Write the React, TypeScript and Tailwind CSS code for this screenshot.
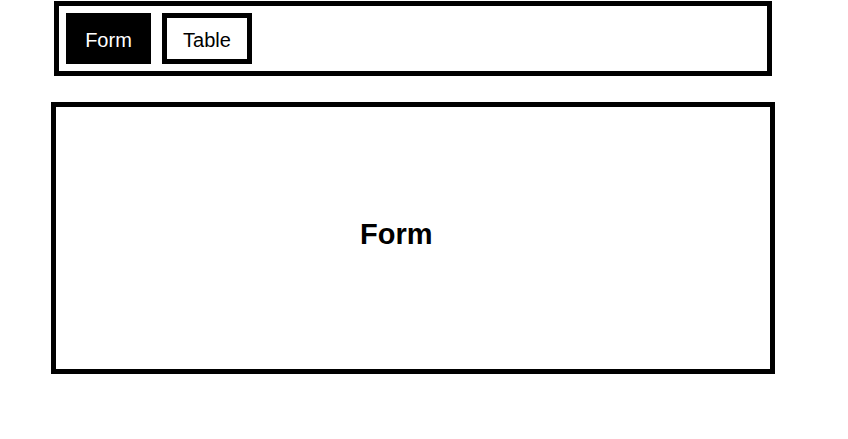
import { useState } from 'react';

type Tab = 'Form' | 'Table';

export default function App() {
  const [tab, setTab] = useState<Tab>('Form');

  const tabClass = (t: Tab) =>
    `h-[51px] border-[5px] border-black text-[20px] leading-none pt-[3px] flex items-center justify-center ${
      t === tab ? 'bg-black text-white' : 'bg-white text-black'
    }`;

  return (
    <div className="min-h-screen bg-white pt-[1px] font-['Liberation_Sans',Arial,sans-serif]">
      {/* Tab bar */}
      <div className="ml-[54px] w-[718px] h-[75px] border-[5px] border-black flex items-center gap-[11px] px-[7px]">
        <button onClick={() => setTab('Form')} className={`${tabClass('Form')} w-[85px]`}>
          Form
        </button>
        <button onClick={() => setTab('Table')} className={`${tabClass('Table')} w-[90px]`}>
          Table
        </button>
      </div>

      {/* Content */}
      <div className="ml-[51px] mt-[26px] w-[724px] h-[272px] border-[5px] border-black flex items-center pl-[304px] pb-[8px]">
        <h2 className="text-[29px] font-bold text-black leading-none">{tab}</h2>
      </div>
    </div>
  );
}
